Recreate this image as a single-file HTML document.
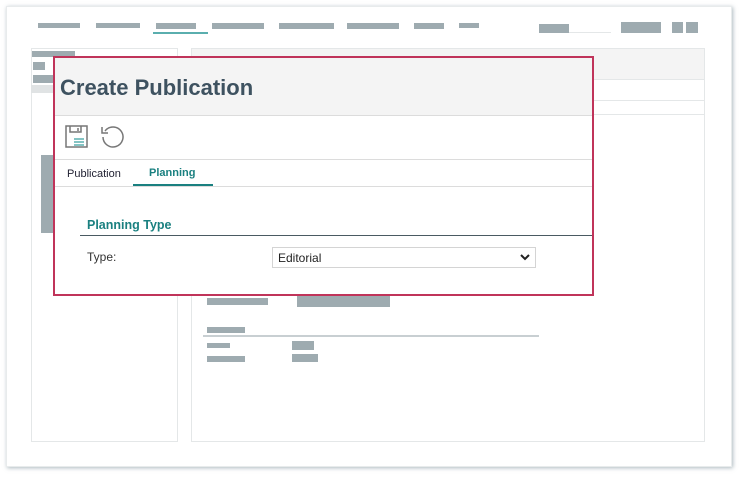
<!DOCTYPE html><html><head><style>
*{margin:0;padding:0;box-sizing:border-box}
body{width:740px;height:478px;background:#fff;position:relative;overflow:hidden;font-family:"Liberation Sans",sans-serif}
.a{position:absolute}
.g{position:absolute;background:#9eabb0}
</style></head><body>
<div class="a" style="left:6px;top:6px;width:726px;height:461px;background:#fff;box-shadow:1px 1px 4px rgba(120,140,150,.6);border:1px solid #e8ebec"></div>
<!-- nav -->
<div class="g" style="left:38px;top:23px;width:42px;height:5px"></div>
<div class="g" style="left:96px;top:23px;width:44px;height:5px"></div>
<div class="g" style="left:156px;top:23px;width:40px;height:6px"></div>
<div class="a" style="left:153px;top:32px;width:55px;height:2px;background:#5aaeae"></div>
<div class="g" style="left:212px;top:23px;width:52px;height:6px"></div>
<div class="g" style="left:279px;top:23px;width:55px;height:6px"></div>
<div class="g" style="left:347px;top:23px;width:52px;height:6px"></div>
<div class="g" style="left:414px;top:23px;width:30px;height:6px"></div>
<div class="g" style="left:459px;top:23px;width:20px;height:5px"></div>
<div class="g" style="left:539px;top:24px;width:30px;height:9px"></div>
<div class="a" style="left:569px;top:32px;width:42px;height:1px;background:#e4e7e8"></div>
<div class="g" style="left:621px;top:22px;width:40px;height:11px"></div>
<div class="g" style="left:672px;top:22px;width:11px;height:11px"></div>
<div class="g" style="left:686px;top:22px;width:12px;height:11px"></div>
<!-- panels -->
<div class="a" style="left:31px;top:48px;width:147px;height:394px;border:1px solid #e4e7e8"></div>
<div class="a" style="left:191px;top:48px;width:514px;height:394px;border:1px solid #e4e7e8"></div>
<div class="a" style="left:192px;top:49px;width:512px;height:31px;background:#f4f4f4;border-bottom:1px solid #e4e7e8"></div>
<div class="a" style="left:192px;top:100px;width:512px;height:1px;background:#e4e7e8"></div>
<div class="a" style="left:192px;top:114px;width:512px;height:1px;background:#e4e7e8"></div>
<div class="g" style="left:32px;top:51px;width:43px;height:6px"></div>
<div class="g" style="left:33px;top:62px;width:12px;height:8px"></div>
<div class="g" style="left:33px;top:75px;width:30px;height:8px"></div>
<div class="a" style="left:31px;top:85px;width:25px;height:8px;background:#e0e3e4"></div>
<div class="g" style="left:41px;top:155px;width:12px;height:78px"></div>
<div class="g" style="left:207px;top:298px;width:61px;height:7px"></div>
<div class="g" style="left:297px;top:296px;width:93px;height:11px"></div>
<div class="g" style="left:207px;top:327px;width:38px;height:6px"></div>
<div class="a" style="left:203px;top:335px;width:336px;height:2px;background:#c8cfd2"></div>
<div class="g" style="left:207px;top:343px;width:23px;height:5px"></div>
<div class="g" style="left:292px;top:341px;width:22px;height:9px"></div>
<div class="g" style="left:207px;top:356px;width:38px;height:6px"></div>
<div class="g" style="left:292px;top:354px;width:26px;height:8px"></div>
<!-- modal -->
<div class="a" style="left:53px;top:56px;width:541px;height:240px;border:2px solid #c0345a;background:#fff">
 <div class="a" style="left:0;top:0;width:537px;height:58px;background:#f4f4f4;border-bottom:1px solid #dcdcdc"></div>
 <div class="a" style="left:5px;top:17px;font-size:22px;font-weight:bold;color:#3e5260">Create Publication</div>
 <svg class="a" style="left:10px;top:67px" width="24" height="24" viewBox="0 0 24 24" fill="none" stroke="#777" stroke-width="1.5">
  <rect x="1" y="1" width="21" height="21"/><path d="M5 1v6h11V1M13 3v3"/><path d="M9 14h10M9 17h10M9 20h10" stroke="#3aa0a0" stroke-width="1.2"/></svg>
 <svg class="a" style="left:45px;top:67px" width="24" height="24" viewBox="0 0 24 24" fill="none" stroke="#777" stroke-width="1.5">
  <path d="M5 6A10 10 0 1 1 3 12"/><path d="M2 2v6h6"/></svg>
 <div class="a" style="left:0;top:101px;width:537px;height:1px;background:#dcdcdc"></div>
 <div class="a" style="left:12px;top:110px;font-size:11px;color:#223">Publication</div>
 <div class="a" style="left:94px;top:109px;font-size:11px;font-weight:bold;color:#1a8080">Planning</div>
 <div class="a" style="left:78px;top:126px;width:80px;height:2px;background:#1a8080"></div>
 <div class="a" style="left:0;top:128px;width:537px;height:1px;background:#dcdcdc"></div>
 <div class="a" style="left:32px;top:160px;font-size:12.5px;font-weight:bold;color:#1a8080">Planning Type</div>
 <div class="a" style="left:25px;top:177px;width:512px;height:1px;background:#4a5a62"></div>
 <div class="a" style="left:32px;top:192px;font-size:12px;color:#333">Type:</div>
 <div class="a" style="left:217px;top:189px;width:264px;height:21px;border:1px solid #d4d4d4;font-size:12px;color:#222;padding:3px 0 0 5px">Editorial
  <svg class="a" style="right:5px;top:6px" width="10" height="7" viewBox="0 0 10 7"><path d="M1 1l4 4 4-4" stroke="#222" stroke-width="2" fill="none"/></svg></div>
</div>
</body></html>
